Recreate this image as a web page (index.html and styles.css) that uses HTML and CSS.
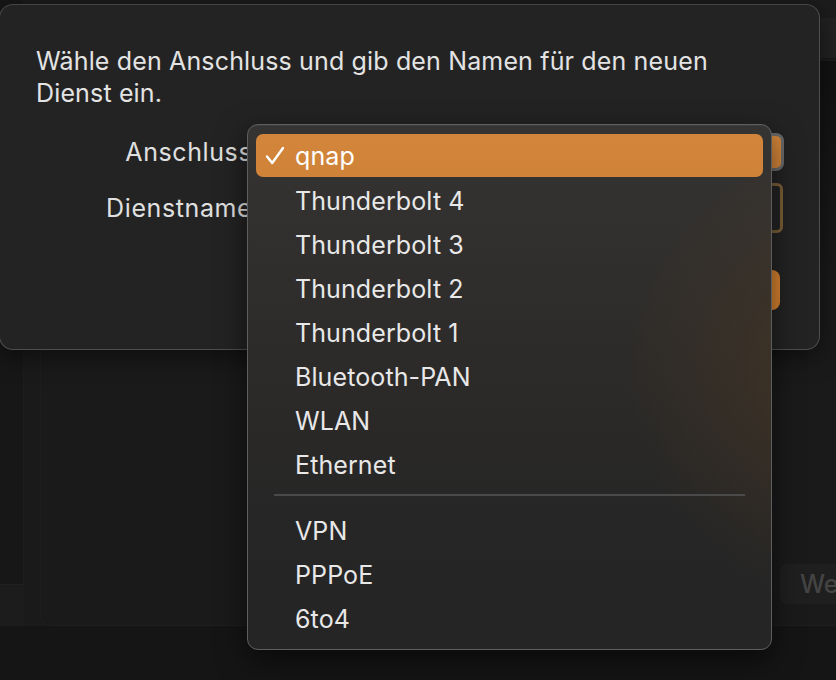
FILE: index.html
```html
<!DOCTYPE html>
<html lang="de">
<head>
<meta charset="utf-8">
<title>Neuer Dienst</title>
<link rel="stylesheet" href="styles.css">
</head>
<body>
<div class="desk">
  <div class="window">
    <aside class="sidebar"><div class="side-box"></div></aside>
    <section class="panel">
      <div class="panel-foot"><span class="ghost-btn">We</span></div>
    </section>
  </div>

  <div class="sheet">
    <p class="prompt">Wähle den Anschluss und gib den Namen für den neuen Dienst ein.</p>
    <div class="form">
      <span class="label">Anschluss:</span><div class="popup"></div>
      <span class="label">Dienstname:</span><div class="field"></div>
    </div>
    <div class="actions"><span class="primary">Erstellen</span></div>
  </div>

  <div class="menu">
    <div class="item selected">
      <svg class="check" width="22" height="22" viewBox="0 0 22 22"><path d="M3 11.5 L8.2 18 L19 3" fill="none" stroke="#fff" stroke-width="2.4" stroke-linecap="round" stroke-linejoin="round"/></svg>
      <span>qnap</span>
    </div>
    <div class="item"><span>Thunderbolt 4</span></div>
    <div class="item"><span>Thunderbolt 3</span></div>
    <div class="item"><span>Thunderbolt 2</span></div>
    <div class="item"><span>Thunderbolt 1</span></div>
    <div class="item"><span>Bluetooth-PAN</span></div>
    <div class="item"><span>WLAN</span></div>
    <div class="item"><span>Ethernet</span></div>
    <div class="sep"></div>
    <div class="item"><span>VPN</span></div>
    <div class="item"><span>PPPoE</span></div>
    <div class="item"><span>6to4</span></div>
  </div>
</div>
</body>
</html>
```

FILE: styles.css
```css
* { box-sizing: border-box; }
html, body {
  margin: 0;
  padding: 0;
  background: #151515;
}
body {
  width: 836px;
  height: 680px;
  overflow: hidden;
  font-family: Inter, "Liberation Sans", sans-serif;
}
.desk {
  position: relative;
  width: 836px;
  height: 680px;
  background: #151515;
}

/* background window */
.window {
  display: flex;
  height: 626px;
  background: linear-gradient(#1c1c1c 0 18px, #222 18px 58px, #1a1a1a 58px);
}
.sidebar {
  width: 24px;
  flex: none;
  background: #171717;
  border-right: 1px solid #1c1c1c;
  display: flex;
  flex-direction: column;
  justify-content: flex-end;
}
.side-box {
  height: 42px;
  background: #1c1c1c;
  border-top: 1px solid #202020;
}
.panel {
  flex: 1;
  margin-left: 16px;
  margin-top: 60px;
  background: linear-gradient(#121212, #1a1a1a 40%);
  border: 1px solid #1e1e1e;
  border-right: 0;
  border-radius: 0 0 0 10px;
  display: flex;
  flex-direction: column;
  justify-content: flex-end;
  padding-bottom: 21px;
}
.panel-foot {
  display: flex;
  justify-content: flex-end;
}
.ghost-btn {
  width: 56px;
  height: 40px;
  background: #1f1f1f;
  border-radius: 7px 0 0 7px;
  color: #444;
  font-size: 25px;
  font-weight: 500;
  line-height: 40px;
  padding-left: 20px;
  white-space: nowrap;
  overflow: hidden;
}

/* sheet dialog */
.sheet {
  position: absolute;
  left: -1px;
  top: 4px;
  width: 821px;
  height: 346px;
  background: #232323;
  border: 1px solid #4e4e4e;
  border-top-color: #454545;
  border-radius: 14px;
  box-shadow: 0 6px 24px rgba(0,0,0,0.5);
  padding: 40px 0 0 36px;
}
.prompt {
  margin: 0;
  width: 730px;
  color: #e3e3e3;
  font-size: 25px;
  line-height: 32px;
  letter-spacing: 0.15px;
}
.form {
  display: grid;
  grid-template-columns: 218px 529px;
  row-gap: 12px;
  margin-top: 24px;
  align-items: center;
}
.label {
  text-align: right;
  color: #e0e0e0;
  font-size: 25px;
  white-space: nowrap;
  margin-right: -6px;
  letter-spacing: 0.6px;
}
.popup {
  height: 38px;
  background: #d5873a;
  border: 3px solid #6a6a6a;
  border-radius: 8px;
  margin-left: 12px;
  margin-right: -1px;
}
.field {
  height: 50px;
  background: #232323;
  border: 3px solid #7b5f37;
  border-radius: 6px;
  margin-left: 12px;
}
.actions {
  display: flex;
  justify-content: flex-end;
  padding-right: 39px;
  margin-top: 37px;
}
.primary {
  width: 120px;
  height: 40px;
  background: #d7832f;
  border-radius: 8px;
  color: #fff;
  font-size: 22px;
  line-height: 40px;
  text-align: center;
}

/* dropdown menu */
.menu {
  position: absolute;
  left: 247px;
  top: 124px;
  width: 525px;
  height: 526px;
  border: 1px solid #5e5e5e;
  border-radius: 11px;
  padding: 9px 8px 8px;
  background:
    radial-gradient(ellipse 260px 240px at 640px 250px, rgba(90,62,32,0.55), rgba(90,62,32,0) 100%),
    linear-gradient(#363432 0%, #2d2b29 45%, #262626 75%, #252525 100%);
  box-shadow: 0 10px 30px rgba(0,0,0,0.55), inset 0 1px 0 rgba(255,255,255,0.05);
}
.item {
  position: relative;
  height: 44px;
  display: flex;
  align-items: center;
  padding-left: 39px;
  padding-top: 1px;
  color: #e8e8e8;
  font-size: 25px;
  letter-spacing: 0.1px;
}
.item.selected {
  height: 43px;
  margin-bottom: 1px;
  background: linear-gradient(#d3863b, #cf8338);
  border-radius: 7px;
  color: #fff;
}
.check {
  position: absolute;
  left: 8px;
  top: 11px;
}
.sep {
  height: 22px;
  padding: 8px 18px 0;
}
.sep::before {
  content: "";
  display: block;
  height: 2px;
  background: #4a4a4a;
}
```
